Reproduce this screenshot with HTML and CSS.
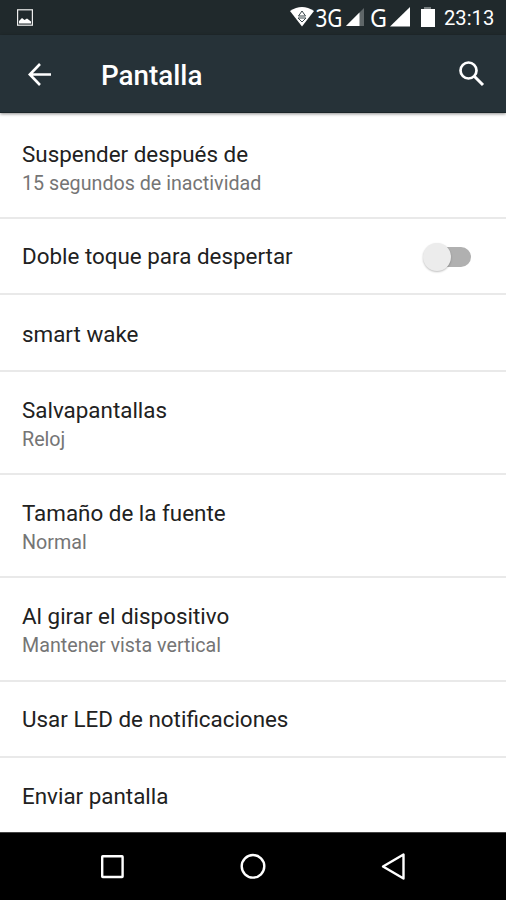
FILE: index.html
```html
<!DOCTYPE html>
<html lang="es">
<head>
<meta charset="utf-8">
<title>Pantalla</title>
<link rel="stylesheet" href="styles.css">
</head>
<body>
<div class="status">
  <svg class="pic" width="16" height="17" viewBox="0 0 16 17"><rect x=".6" y=".8" width="14.800" height="15.400" fill="none" stroke="#eee" stroke-width="1.200"/><path d="M2 14.500V12l3-3 2.500 2L10 9.500l4 3v2z" fill="#fff"/></svg>
  <svg class="signals" width="150" height="35" viewBox="0 0 150 35">
    <path d="M0 11Q12 3 24 11L12 26.500z" fill="#fff"/>
    <path d="M12 11l3.500 5h-7zM8 18h8L12 22z" fill="#fff" stroke="#39464b" stroke-width="1"/>
    <path d="M56 26L74 8V26z" fill="#5f6668"/><path d="M56 26L69.500 12.500V26z" fill="#fff"/>
    <path d="M100 26.500L120 7V26.500z" fill="#fff"/>
    <path d="M134 7h7v3h-7z" fill="#777e80"/><path d="M131 9h14v18h-14z" fill="#fff"/>
    <text class="net" x="25.500" y="27" textLength="27" lengthAdjust="spacingAndGlyphs">3G</text>
    <text class="net" x="80" y="27" textLength="17" lengthAdjust="spacingAndGlyphs">G</text>
  </svg>
  <span class="clock">23:13</span>
</div>
<header class="bar">
  <svg class="back" width="24" height="24" viewBox="0 0 24 24"><path d="M23 12.500H2M12 2L1.800 12.500 12 23" fill="none" stroke="#fff" stroke-width="2.600"/></svg>
  <h1>Pantalla</h1>
  <svg class="search" width="26" height="26" viewBox="0 0 26 26"><circle cx="9.500" cy="9.500" r="8" fill="none" stroke="#fff" stroke-width="2.700"/><path d="M15.500 15.500l8.500 8.500" stroke="#fff" stroke-width="3"/></svg>
</header>
<main>
  <section class="row first"><div><h2>Suspender después de</h2><p>15 segundos de inactividad</p></div></section>
  <section class="row one"><h2>Doble toque para despertar</h2><span class="toggle"></span></section>
  <section class="row one tall"><h2>smart wake</h2></section>
  <section class="row two"><div><h2>Salvapantallas</h2><p>Reloj</p></div></section>
  <section class="row two"><div><h2>Tamaño de la fuente</h2><p>Normal</p></div></section>
  <section class="row two taller"><div><h2>Al girar el dispositivo</h2><p>Mantener vista vertical</p></div></section>
  <section class="row one"><h2>Usar LED de notificaciones</h2></section>
  <section class="row one last"><h2>Enviar pantalla</h2></section>
</main>
<nav>
  <svg width="506" height="67" viewBox="0 0 506 67" fill="none" stroke="#fff" stroke-width="2.400"><rect x="102.200" y="23.200" width="20.400" height="20.800" rx=".5"/><circle cx="253" cy="33.300" r="11.300"/><path d="M403.500 21.500V45.500L383 33.500z" stroke-linejoin="round"/></svg>
</nav>
</body>
</html>
```
FILE: styles.css
```css
* { box-sizing: border-box; margin: 0; }
body { width: 506px; height: 900px; overflow: hidden; display: flex; flex-direction: column; background: #fff; font-family: Roboto, sans-serif; }
.status { height: 35px; flex: none; display: flex; align-items: center; background: #20292c; color: #fff; padding-left: 17px; }
.signals { margin-left: 257px; }
.net { font: 25px "Noto Sans", sans-serif; fill: #fff; }
.clock { font-size: 20.2px; margin-left: 4px; padding-top: 1px; }
.bar { height: 78px; flex: none; display: flex; align-items: center; background: #263238; color: #fff; padding: 1px 21px 0 28px; border-bottom: 1px solid #1b2529; box-shadow: 0 1px 3px rgba(0,0,0,.45); z-index: 1; }
h1 { font-size: 27.8px; font-weight: 500; margin-left: 49px; padding-top: 2px; flex: 1; }
main { flex: none; height: 720px; }
.row { display: flex; align-items: center; justify-content: space-between; padding: 2px 35px 0 22px; border-bottom: 2px solid #e9e9e9; }
.first { height: 106px; padding-top: 7px; }
.one { height: 76px; padding-top: 1px; }
.tall { height: 77px; padding-top: 3px; }
.two { height: 103px; padding-top: 4px; }
.taller { height: 104px; padding-top: 3px; }
.last { height: 75px; padding-top: 1px; border: 0; }
h2 { font-size: 22.4px; line-height: 28px; padding-bottom: 2px; font-weight: 400; color: #212121; }
.one h2 { padding-bottom: 1px; }
p { font-size: 19.7px; line-height: 28px; color: #757575; }
.toggle { width: 42px; height: 20px; border-radius: 10px; background: #b0b0b0; position: relative; }
.toggle::before { content: ""; position: absolute; left: -6px; top: -4px; width: 28px; height: 28px; border-radius: 50%; background: #ececec; box-shadow: 0 1px 2px rgba(0,0,0,.25); }
nav { flex: none; background: #000; border-top: 1px solid #444; margin-top: -1px; height: 68px; }
nav svg { display: block; }
```
